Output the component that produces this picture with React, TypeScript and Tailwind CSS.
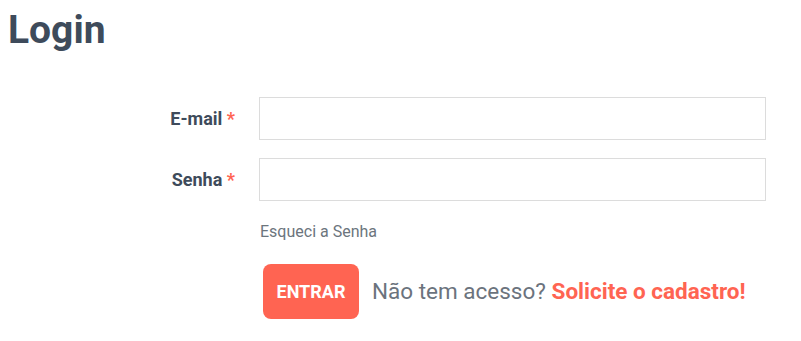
export default function App() {
  return (
    <div className="min-h-[341px] w-[801px] bg-white font-['Roboto',sans-serif] text-[#3e4b5b]">
      <h1 className="px-2 pt-[2px] text-[39px] font-bold leading-[56px]">Login</h1>

      <form className="mt-[39px] flex flex-col gap-[18px] pr-[35px]">
        <div className="flex items-center">
          <label className="w-[259px] shrink-0 pr-[24px] text-right text-[18px] font-bold">
            E-mail <span className="text-[#ff6452]">*</span>
          </label>
          <input type="email" className="h-[43px] flex-1 border border-[#dcdcdc] px-3 outline-none" />
        </div>
        <div className="flex items-center">
          <label className="w-[259px] shrink-0 pr-[24px] text-right text-[18px] font-bold">
            Senha <span className="text-[#ff6452]">*</span>
          </label>
          <input type="password" className="h-[43px] flex-1 border border-[#dcdcdc] px-3 outline-none" />
        </div>
      </form>

      <div className="ml-[260px] mt-[19px] text-base text-[#6c757d]">Esqueci a Senha</div>

      <div className="ml-[263px] mt-[20px] flex items-center gap-[13px]">
        <button className="h-[55px] w-[96px] rounded-lg bg-[#ff6452] text-[18px] font-bold text-white">ENTRAR</button>
        <p className="text-[22.5px] text-[#6b737d]">
          Não tem acesso? <span className="font-bold text-[#ff6452]">Solicite o cadastro!</span>
        </p>
      </div>
    </div>
  );
}
